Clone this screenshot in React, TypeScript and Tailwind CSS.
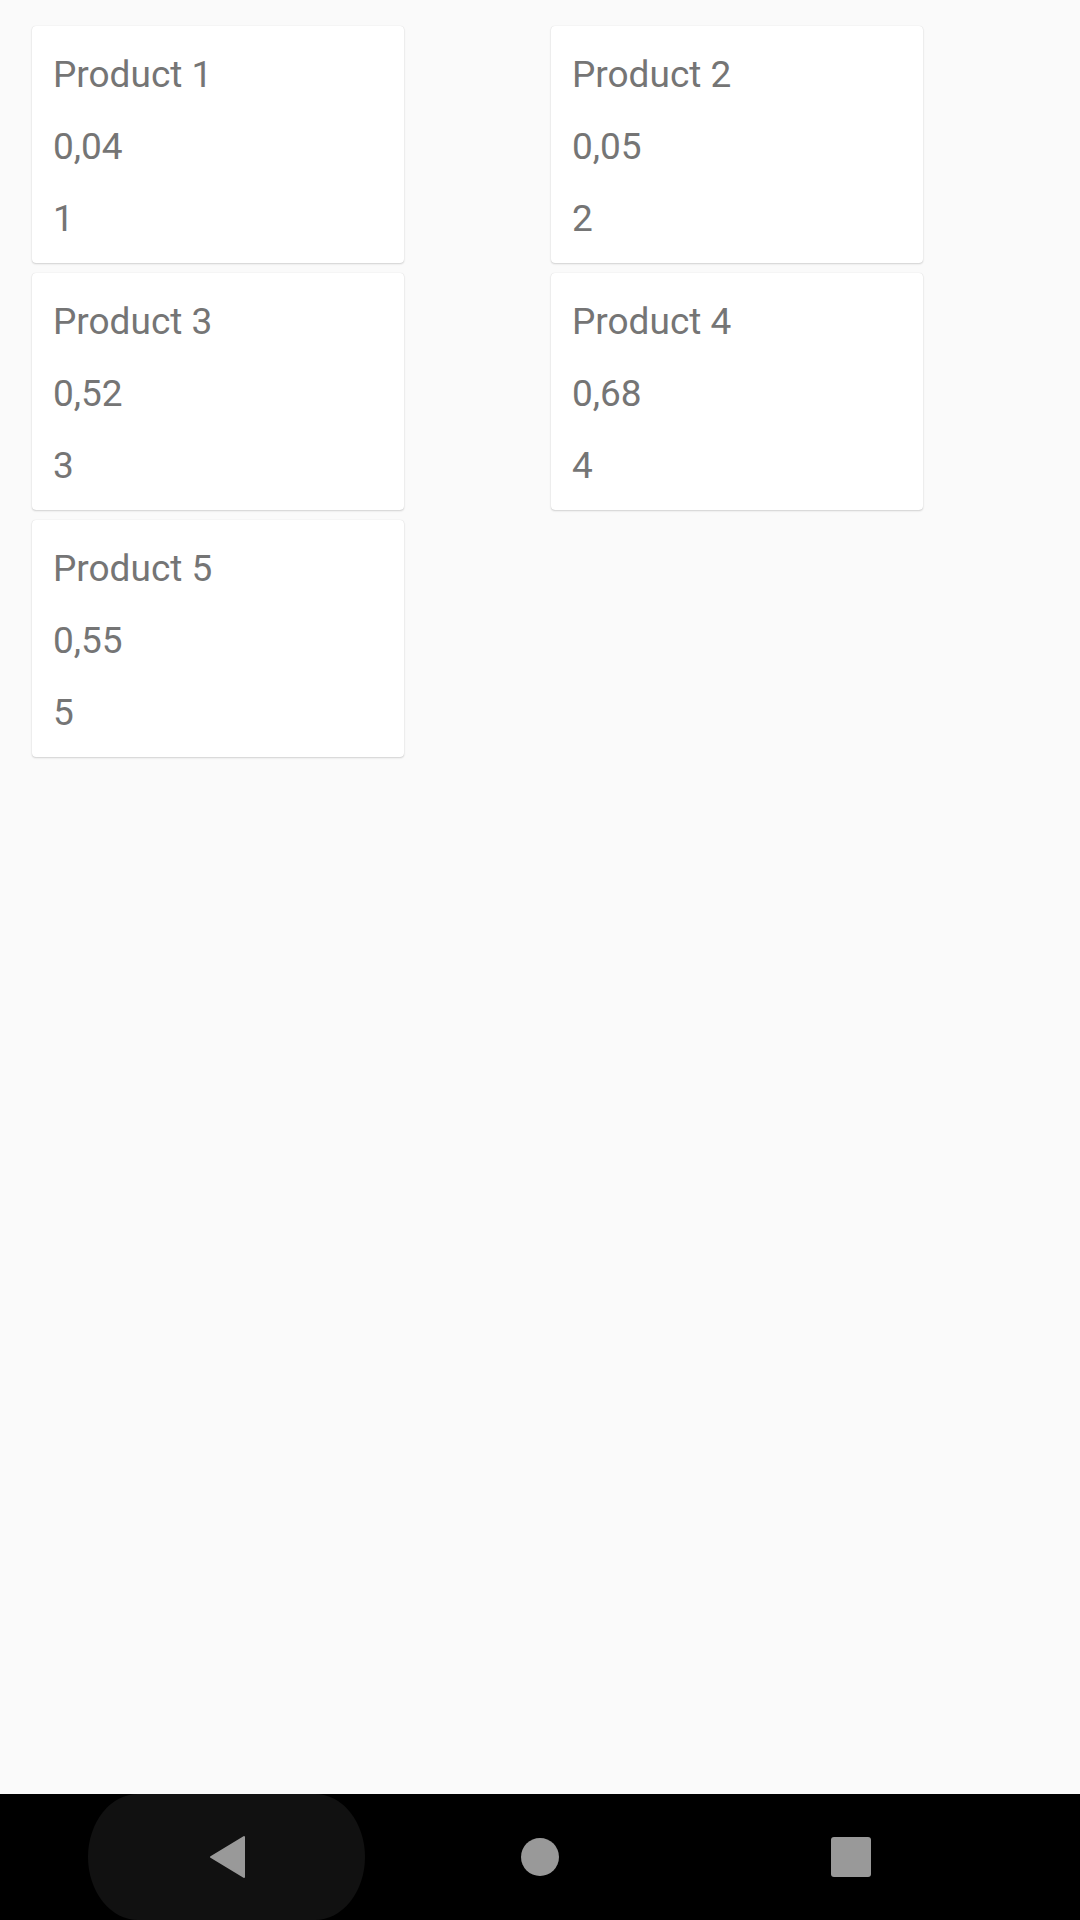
import React from "react";

const products = [
  { name: "Product 1", price: "0,04", qty: "1" },
  { name: "Product 2", price: "0,05", qty: "2" },
  { name: "Product 3", price: "0,52", qty: "3" },
  { name: "Product 4", price: "0,68", qty: "4" },
  { name: "Product 5", price: "0,55", qty: "5" },
];

function Card({ name, price, qty }: { name: string; price: string; qty: string }) {
  return (
    <div className="flex h-[237px] w-[372px] flex-col rounded-[4px] bg-white pl-[21px] pt-[13px] pb-[8px] shadow-[0_1px_2px_rgba(0,0,0,0.16),0_0_1px_rgba(0,0,0,0.14)]">
      <div className="h-[72px] text-[37px] leading-[72px] text-[#757575]">{name}</div>
      <div className="h-[72px] text-[37px] leading-[72px] text-[#757575]">{price}</div>
      <div className="h-[72px] text-[37px] leading-[72px] text-[#757575]">{qty}</div>
    </div>
  );
}

export default function App() {
  return (
    <div
      className="flex h-[1920px] w-[1080px] flex-col overflow-hidden bg-[#fafafa]"
      style={{ fontFamily: "Roboto, 'Noto Sans', sans-serif" }}
    >
      <div className="flex-1 pt-[26px] pl-[32px]">
        <div className="grid grid-cols-[372px_372px] gap-x-[147px] gap-y-[10px]">
          {products.map((p) => (
            <Card key={p.name} {...p} />
          ))}
        </div>
      </div>
      <div className="flex h-[126px] items-center bg-black">
        <div className="ml-[88px] flex h-[126px] w-[277px] items-center justify-center rounded-[50px/63px] bg-[#111111]">
          <svg width="38" height="44" viewBox="0 0 38 44">
            <polygon
              points="3,22 36,2 36,42"
              fill="#999999"
              stroke="#999999"
              strokeWidth="2"
              strokeLinejoin="round"
            />
          </svg>
        </div>
        <div className="ml-[156px] h-[38px] w-[38px] rounded-full bg-[#999999]" />
        <div className="ml-[272px] h-[40px] w-[40px] rounded-[3px] bg-[#999999]" />
      </div>
    </div>
  );
}
